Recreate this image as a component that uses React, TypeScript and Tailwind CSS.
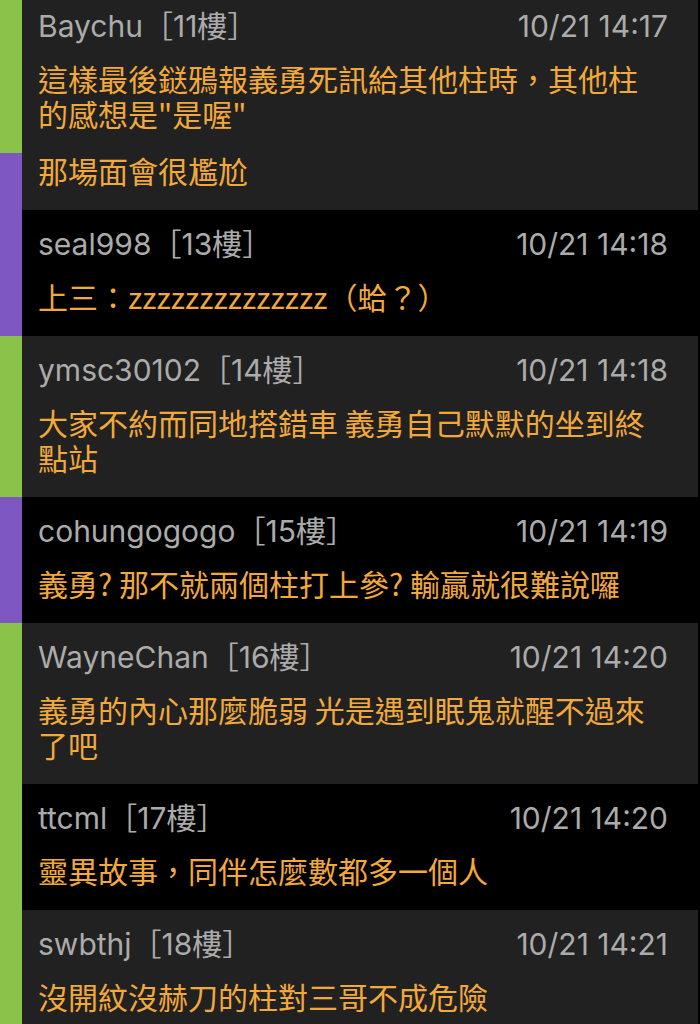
type Comment = {
  user: string;
  floor: number;
  time: string;
  body: string[];
  bar: string;
  bg: string;
};

const comments: Comment[] = [
  {
    user: "Baychu",
    floor: 11,
    time: "10/21 14:17",
    body: ["這樣最後鎹鴉報義勇死訊給其他柱時，其他柱的感想是\"是喔\"", "那場面會很尷尬"],
    bar: "bg-[#8bc34a]",
    bg: "bg-[#212121]",
  },
  {
    user: "seal998",
    floor: 13,
    time: "10/21 14:18",
    body: ["上三：zzzzzzzzzzzzzz（蛤？）"],
    bar: "bg-[#7e57c2]",
    bg: "bg-black",
  },
  {
    user: "ymsc30102",
    floor: 14,
    time: "10/21 14:18",
    body: ["大家不約而同地搭錯車 義勇自己默默的坐到終點站"],
    bar: "bg-[#8bc34a]",
    bg: "bg-[#212121]",
  },
  {
    user: "cohungogogo",
    floor: 15,
    time: "10/21 14:19",
    body: ["義勇? 那不就兩個柱打上參? 輸贏就很難說囉"],
    bar: "bg-[#7e57c2]",
    bg: "bg-black",
  },
  {
    user: "WayneChan",
    floor: 16,
    time: "10/21 14:20",
    body: ["義勇的內心那麼脆弱 光是遇到眠鬼就醒不過來了吧"],
    bar: "bg-[#8bc34a]",
    bg: "bg-[#212121]",
  },
  {
    user: "ttcml",
    floor: 17,
    time: "10/21 14:20",
    body: ["靈異故事，同伴怎麼數都多一個人"],
    bar: "bg-[#8bc34a]",
    bg: "bg-black",
  },
  {
    user: "swbthj",
    floor: 18,
    time: "10/21 14:21",
    body: ["沒開紋沒赫刀的柱對三哥不成危險"],
    bar: "bg-[#8bc34a]",
    bg: "bg-[#212121]",
  },
];

const CommentRow = ({ c, first }: { c: Comment; first: boolean }) => {
  return (
    <div className={`flex w-[698px] ${c.bg}`}>
      {/* left marker bar; first one is cut by the next poster's colour */}
      {first ? (
        <div className="flex w-[22px] shrink-0 flex-col">
          <div className="flex-1 bg-[#8bc34a]" />
          <div className="h-[57px] bg-[#7e57c2]" />
        </div>
      ) : (
        <div className={`w-[22px] shrink-0 ${c.bar}`} />
      )}

      <div className={`flex-1 pl-4 pr-[30px] pb-[22px] ${first ? "pt-2" : "pt-4"}`}>
        <div className="flex h-9 items-center justify-between font-['Inter','Noto_Sans_CJK_TC',sans-serif] text-[30px] leading-9 text-[#ababab]">
          <span>
            {c.user}［{c.floor}樓］
          </span>
          <span>{c.time}</span>
        </div>
        <div className="mt-[17px] flex flex-col gap-[22px] pr-1 font-['Noto_Sans_CJK_TC',sans-serif] text-[30px] leading-[35px] text-[#f2a93b]">
          {c.body.map((p, i) => (
            <p key={i}>{p}</p>
          ))}
        </div>
      </div>
    </div>
  );
};

export default function App() {
  return (
    <div className="h-[1024px] w-[700px] overflow-hidden bg-black">
      {comments.map((c, i) => (
        <CommentRow key={c.floor} c={c} first={i === 0} />
      ))}
    </div>
  );
}
